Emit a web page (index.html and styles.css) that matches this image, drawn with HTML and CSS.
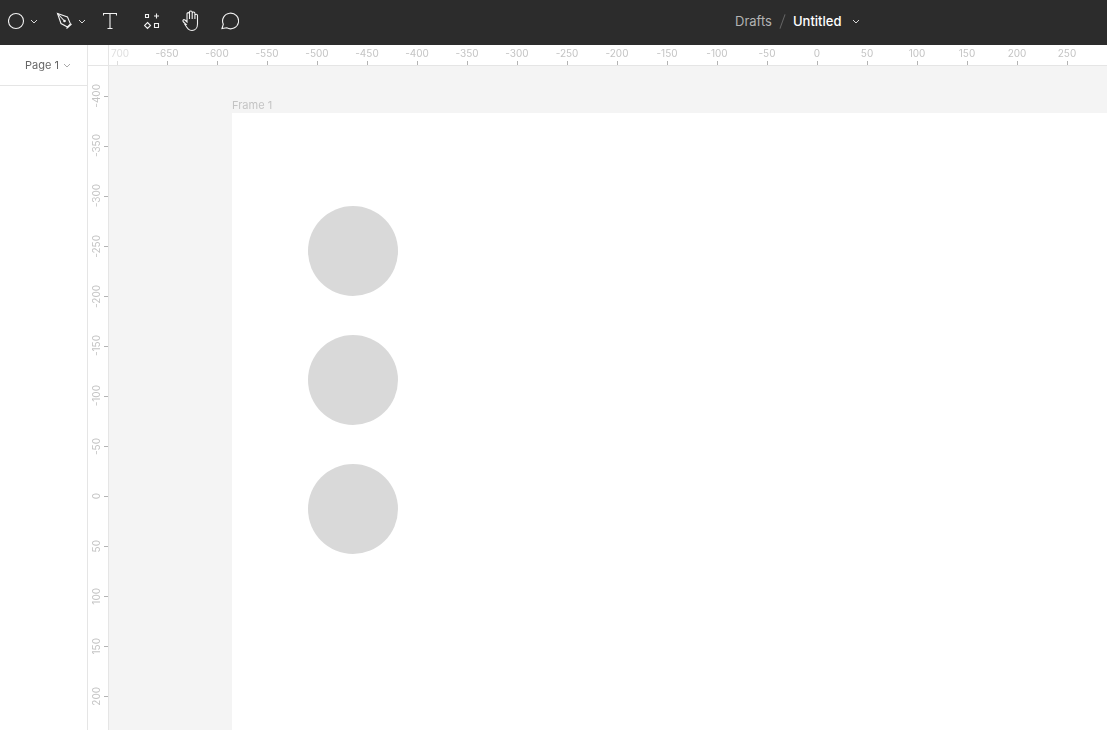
FILE: index.html
```html
<!DOCTYPE html>
<html lang="en">
<head>
	<meta charset="UTF-8">
	<title>Untitled</title>
	<link rel="stylesheet" href="styles.css">
</head>
<body>
	<div class="topbar">
		<div class="tools">
			<svg class="tool tool-shape" width="18" height="18" viewBox="0 0 18 18"><circle cx="8" cy="9" r="7.500"/></svg>
			<svg class="chev chev-shape" width="8" height="5" viewBox="0 0 8 5"><path d="M1 1l3 3 3-3"/></svg>
			<svg class="tool tool-pen" width="18" height="18" viewBox="0 0 18 18"><path d="M1.500 1.500l10 3.500 3 7-3 3-6.500-3.500z"/><path d="M1.500 1.500l6.500 7"/><path d="M10.500 16.500l5-4.500"/><circle class="dot" cx="8.500" cy="9" r="1.300"/></svg>
			<svg class="chev chev-pen" width="8" height="5" viewBox="0 0 8 5"><path d="M1 1l3 3 3-3"/></svg>
			<svg class="tool tool-text" width="14" height="18" viewBox="0 0 14 18"><path d="M.5 3.500V1.500h13v2M7 1.500v15M4.500 16.500h5"/></svg>
			<svg class="tool tool-comps" width="16" height="18" viewBox="0 0 16 18"><path d="M1.500 2.500h3v3h-3zM10.500 11.500h4v4h-4zM12.500 1.500v5M10 4h5M3.500 10.500l3 3-3 3-3-3z"/></svg>
			<svg class="tool tool-hand" width="20" height="22" viewBox="0 0 20 22"><path d="M5 14.500L2.500 12C1 10.500 2.500 9 4 10l2 2V4c0-1.800 2.500-1.800 2.500 0v5-6.800c0-1.700 2.700-1.700 2.700 0V9 3.200c0-1.700 2.700-1.700 2.700 0V9 5.500c0-1.700 2.600-1.700 2.600 0V14c0 4-2.500 6.500-5.500 6.500-3.500 0-4.500-2-7-6z"/></svg>
			<svg class="tool tool-comment" width="18" height="18" viewBox="0 0 18 18"><path d="M1 16.500l1.300-4.300A8 7.800 0 1 1 5.700 15.800z"/></svg>
		</div>
		<div class="title">
			<span class="crumb">Drafts</span>
			<span class="slash"></span>
			<span class="file">Untitled</span>
			<svg class="chev chev-title" width="8" height="5" viewBox="0 0 8 5"><path d="M1 1l3 3 3-3"/></svg>
		</div>
	</div>
	<div class="main">
		<div class="sidebar">
			<div class="page-row">
				<span class="page-name">Page 1</span>
				<svg class="page-chev" width="8" height="5" viewBox="0 0 8 5"><path d="M1 1l3 3 3-3"/></svg>
			</div>
		</div>
		<div class="workspace">
			<div class="corner"></div>
			<div class="ruler-top">
				<div class="mark"><span>700</span><i></i></div>
				<div class="mark"><span>-650</span><i></i></div>
				<div class="mark"><span>-600</span><i></i></div>
				<div class="mark"><span>-550</span><i></i></div>
				<div class="mark"><span>-500</span><i></i></div>
				<div class="mark"><span>-450</span><i></i></div>
				<div class="mark"><span>-400</span><i></i></div>
				<div class="mark"><span>-350</span><i></i></div>
				<div class="mark"><span>-300</span><i></i></div>
				<div class="mark"><span>-250</span><i></i></div>
				<div class="mark"><span>-200</span><i></i></div>
				<div class="mark"><span>-150</span><i></i></div>
				<div class="mark"><span>-100</span><i></i></div>
				<div class="mark"><span>-50</span><i></i></div>
				<div class="mark"><span>0</span><i></i></div>
				<div class="mark"><span>50</span><i></i></div>
				<div class="mark"><span>100</span><i></i></div>
				<div class="mark"><span>150</span><i></i></div>
				<div class="mark"><span>200</span><i></i></div>
				<div class="mark"><span>250</span><i></i></div>
			</div>
			<div class="ruler-left">
				<div class="vmark"><span>-400</span><i></i></div>
				<div class="vmark"><span>-350</span><i></i></div>
				<div class="vmark"><span>-300</span><i></i></div>
				<div class="vmark"><span>-250</span><i></i></div>
				<div class="vmark"><span>-200</span><i></i></div>
				<div class="vmark"><span>-150</span><i></i></div>
				<div class="vmark"><span>-100</span><i></i></div>
				<div class="vmark"><span>-50</span><i></i></div>
				<div class="vmark"><span>0</span><i></i></div>
				<div class="vmark"><span>50</span><i></i></div>
				<div class="vmark"><span>100</span><i></i></div>
				<div class="vmark"><span>150</span><i></i></div>
				<div class="vmark"><span>200</span><i></i></div>
			</div>
			<div class="canvas">
				<div class="frame-label">Frame 1</div>
				<div class="frame">
					<div class="ball"></div>
					<div class="ball"></div>
					<div class="ball"></div>
				</div>
			</div>
		</div>
	</div>
</body>
</html>
```
FILE: styles.css
```css
*{margin: 0;padding: 0;box-sizing: border-box;}
html,body{height: 100%;overflow: hidden;}
body{display: flex;flex-direction: column;font-family: "Inter","Liberation Sans",sans-serif;background: #fff;}

/* top bar */
.topbar{display: flex;align-items: center;height: 45px;flex: none;padding-bottom: 3px;background: #2c2c2c;}
.tools{display: flex;align-items: center;width: 735px;}
.tool{display: block;flex: none;fill: none;stroke: #f2f2f2;stroke-width: 1.1;}
.tool-shape{margin-left: 8px;}
.tool-pen{margin-left: 18px;}
.tool-text{margin-left: 17px;}
.tool-comps{margin-left: 27px;}
.tool-hand{margin-left: 21px;}
.tool-comment{margin-left: 20px;}
.dot{fill: #f2f2f2;stroke: none;}
.chev{display: block;flex: none;fill: none;stroke: #d8d8d8;stroke-width: 1;}
.chev-shape{margin-left: 4px;}
.chev-pen{margin-left: 4px;}
.title{display: flex;align-items: center;font-size: 13px;line-height: 16px;}
.crumb{color: #b3b3b3;}
.slash{width: 1px;height: 15px;margin: 0 10px 0 10px;background: #666;transform: rotate(20deg);}
.file{color: #fff;font-weight: 500;}
.chev-title{margin-left: 11px;}

/* left panel */
.main{display: flex;flex: 1;min-height: 0;}
.sidebar{width: 88px;flex: none;border-right: 1px solid #e5e5e5;}
.page-row{display: flex;align-items: center;height: 41px;padding-left: 25px;border-bottom: 1px solid #e5e5e5;font-size: 11px;color: #666;}
.page-name{will-change: transform;}
.page-chev{margin-left: 4px;fill: none;stroke: #aaa;stroke-width: 1;}

/* rulers and canvas */
.workspace{display: grid;grid-template-columns: 21px 1fr;grid-template-rows: 21px 1fr;flex: 1;min-width: 0;}
.corner{border-right: 1px solid #e5e5e5;border-bottom: 1px solid #e5e5e5;}
.ruler-top{display: flex;overflow: hidden;border-bottom: 1px solid #e5e5e5;will-change: transform;}
.mark{display: flex;flex-direction: column;align-items: center;justify-content: space-between;flex: none;width: 50px;height: 20px;font-size: 10px;line-height: 12px;color: #c4c4c4;}
.mark:first-child{margin-left: -17px;}
.mark span{padding-top: 2px;}
.mark:first-child span{margin-left: 6px;color: #e0e0e0;}
.mark i{display: block;width: 1px;height: 4px;background: #b3b3b3;}
.mark:first-child i{background: #dcdcdc;}
.ruler-left{overflow: hidden;padding-top: 5px;border-right: 1px solid #e5e5e5;will-change: transform;}
.vmark{display: flex;align-items: center;justify-content: space-between;width: 20px;height: 50px;font-size: 10px;line-height: 12px;color: #c4c4c4;}
.vmark span{margin-left: 2px;writing-mode: vertical-rl;transform: rotate(180deg);}
.vmark i{display: block;width: 4px;height: 1px;background: #b3b3b3;}
.canvas{min-height: 0;overflow: hidden;padding: 32px 0 0 123px;background: #f4f4f4;}
.frame-label{height: 15px;font-size: 11px;line-height: 14px;color: #c4c4c4;will-change: transform;}
.frame{display: flex;flex-direction: column;gap: 39px;height: 700px;padding: 93px 0 0 76px;background: #fff;}
.ball{width: 90px;height: 90px;border-radius: 50%;background: #d9d9d9;}
```
